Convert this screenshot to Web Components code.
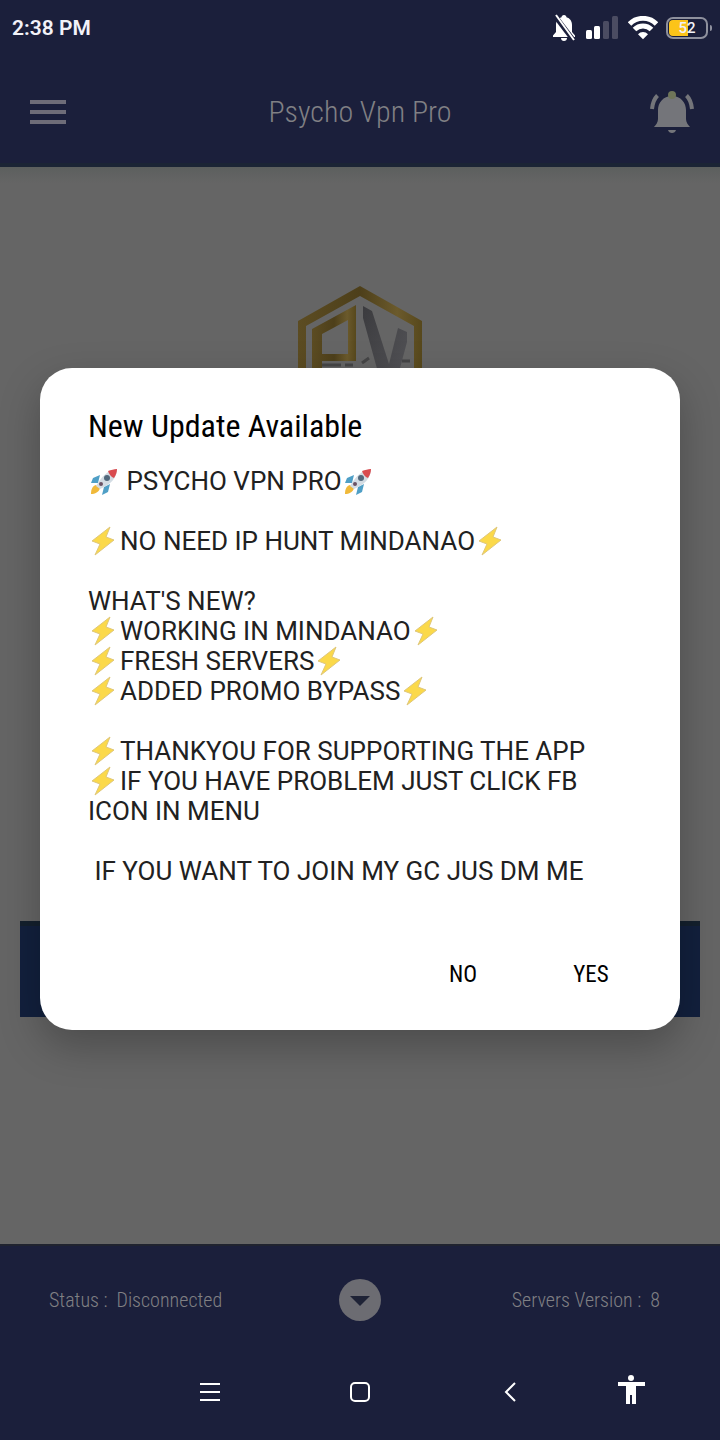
<!DOCTYPE html>
<html lang="en">
<head>
<meta charset="utf-8">
<meta name="viewport" content="width=device-width, initial-scale=1">
<title>Psycho Vpn Pro</title>
<style>
html, body{
    margin:0;
    min-height:100%;
}
body{
    --narrow:'Roboto Condensed',Roboto,sans-serif;
    --bar:#1b1f3b;
    --muted:#808084;
    font-family:Roboto,sans-serif;
    background:#646464;
}
</style>
</head>
<body>

<vpn-screen>
    <status-bar slot="status" time="2:38 PM" battery="52"></status-bar>
    <app-bar slot="header">Psycho Vpn Pro</app-bar>
    <vpn-home></vpn-home>
    <connection-bar slot="footer">
        <span slot="status">Status :&nbsp; Disconnected</span>
        <span slot="version">Servers Version :&nbsp; 8</span>
    </connection-bar>
    <system-nav slot="nav"></system-nav>
    <update-dialog slot="dialog">
        <span slot="title">New Update Available</span>
        <div slot="message"><emoji-icon name="rocket"></emoji-icon> PSYCHO VPN PRO<emoji-icon name="rocket"></emoji-icon>

<emoji-icon name="bolt"></emoji-icon>NO NEED IP HUNT MINDANAO<emoji-icon name="bolt"></emoji-icon>

WHAT'S NEW?
<emoji-icon name="bolt"></emoji-icon>WORKING IN MINDANAO<emoji-icon name="bolt"></emoji-icon>
<emoji-icon name="bolt"></emoji-icon>FRESH SERVERS<emoji-icon name="bolt"></emoji-icon>
<emoji-icon name="bolt"></emoji-icon>ADDED PROMO BYPASS<emoji-icon name="bolt"></emoji-icon>

<emoji-icon name="bolt"></emoji-icon>THANKYOU FOR SUPPORTING THE APP
<emoji-icon name="bolt"></emoji-icon>IF YOU HAVE PROBLEM JUST CLICK FB ICON IN MENU

 IF YOU WANT TO JOIN MY GC JUS DM ME</div>
    </update-dialog>
</vpn-screen>

<script>
// small helper, every element gets an open shadow root from its markup
class BaseElement extends HTMLElement{
    constructor(){
        super();
        const template = document.createElement('template');
        template.innerHTML = this.constructor.markup;
        this.attachShadow({mode:'open'});
        this.shadowRoot.appendChild(template.content.cloneNode(true));
    }
}

class VpnScreen extends BaseElement{
    static markup = `
<style>
:host{
    display:flex;
    flex-direction:column;
    position:relative;
    min-height:100vh;
}
main{
    flex:1;
    display:flex;
}
.overlay{
    position:absolute;
    inset:0;
    display:grid;
    align-items:center;
    padding:0 40px 42px;
}
</style>
<slot name="status"></slot>
<slot name="header"></slot>
<main><slot></slot></main>
<slot name="footer"></slot>
<slot name="nav"></slot>
<div class="overlay"><slot name="dialog"></slot></div>
`;
}

class StatusBar extends BaseElement{
    static markup = `
<style>
:host{
    display:flex;
    justify-content:space-between;
    align-items:center;
    height:56px;
    padding:0 8px 0 12px;
    background:var(--bar);
    color:#f2f2f8;
}
time{
    font-size:21px;
    font-weight:600;
    line-height:32px;
}
.icons{
    display:flex;
    align-items:center;
    gap:8px;
}
svg{
    display:block;
}
.battery{
    display:flex;
    align-items:center;
    gap:2px;
}
.battery b{
    box-sizing:border-box;
    width:42px;
    height:22px;
    border:2px solid #8e909d;
    border-radius:7px;
    padding:1px;
    font-size:15px;
    font-weight:500;
    line-height:16px;
    text-align:center;
    background:linear-gradient(90deg,#fcc419 52%,transparent 52%) content-box;
}
.battery i{
    width:2px;
    height:6px;
    border-radius:0 2px 2px 0;
    background:#8e909d;
}
</style>
<time></time>
<div class="icons">
    <svg width="26" height="28" viewBox="0 0 26 28" role="img" aria-label="Muted">
        <path d="M12 1c1.500 0 2.500 1 2.500 2.300 3.500 1 5.500 4 5.500 7.700v7l3 3.500V23H1v-1.500L4 18v-7c0-3.700 2-6.700 5.500-7.700C9.500 2 10.500 1 12 1zM9 24h6c0 2-1.300 3-3 3s-3-1-3-3z" fill="#fff"/>
        <path d="M3 2l19 25" stroke="#1b1f3b" stroke-width="5"/>
        <path d="M4 1l18 25" stroke="#fff" stroke-width="2"/>
    </svg>
    <svg width="34" height="24" viewBox="0 0 34 24" role="img" aria-label="Signal">
        <rect x="0" y="14" width="6" height="9" rx="1.500" fill="#fff"/>
        <rect x="8" y="10" width="6" height="13" rx="1.500" fill="#fff"/>
        <rect x="17" y="5" width="6" height="18" rx="1.500" fill="#4b4c62"/>
        <rect x="26" y="0" width="6" height="23" rx="1.500" fill="#4b4c62"/>
    </svg>
    <svg width="30" height="24" viewBox="0 0 30 24" role="img" aria-label="Wi-Fi">
        <path d="M1.500 8a19 19 0 0 1 27 0M6.500 13.500a12 12 0 0 1 17 0" fill="none" stroke="#fff" stroke-width="5"/>
        <path d="M10 18.200a7 7 0 0 1 10 0l-5 5z" fill="#fff"/>
    </svg>
    <div class="battery"><b></b><i></i></div>
</div>
`;
    connectedCallback(){
        this.shadowRoot.querySelector('time').textContent = this.getAttribute('time');
        this.shadowRoot.querySelector('b').textContent = this.getAttribute('battery');
    }
}

class AppBar extends BaseElement{
    static markup = `
<style>
:host{
    display:grid;
    grid-template-columns:44px 1fr 44px;
    align-items:center;
    height:111px;
    padding:0 26px;
    box-sizing:border-box;
    background:var(--bar);
    box-shadow:inset 0 -4px #1b2435;
}
h1{
    margin:0;
    font:300 30px/40px var(--narrow);
    color:var(--muted);
    text-align:center;
}
button{
    border:0;
    padding:0;
    background:none;
    cursor:pointer;
}
svg{
    display:block;
    margin:auto;
}
</style>
<button aria-label="Menu">
    <svg width="36" height="24" fill="#6e6c78"><path d="M0 0h36v4H0zM0 10h36v4H0zM0 20h36v4H0z"/></svg>
</button>
<h1><slot></slot></h1>
<button aria-label="Notifications">
    <svg width="44" height="42" viewBox="0 0 44 42">
        <g fill="#74757a">
            <path d="M8 28V19C8 12 13 5 22 5s14 7 14 14v9c0 3 2 6 4 8H4c2-2 4-5 4-8z"/>
            <path d="M18 39h8c-.5 2-2 3-4 3s-3.500-1-4-3z"/>
        </g>
        <circle cx="22" cy="4" r="4" fill="#6f7559"/>
        <path d="M7.500 4.500C4 8 2.500 12 2 18M36.500 4.500C40 8 41.500 12 42 18" fill="none" stroke="#74757a" stroke-width="4"/>
    </svg>
</button>
`;
}

class VpnHome extends BaseElement{
    static markup = `
<style>
:host{
    flex:1;
    display:flex;
    flex-direction:column;
    justify-content:space-between;
    align-items:center;
    box-sizing:border-box;
    padding:119px 20px 227px;
    background:linear-gradient(#5c5f5e,#656565 16px);
}
.connect{
    align-self:stretch;
    height:96px;
    border:0;
    border-top:5px solid #14202d;
    background:#12203d;
}
</style>
<svg width="124" height="144" viewBox="0 0 124 144" role="img" aria-label="PV logo">
    <defs>
        <linearGradient id="gold" x1="0" x2="1">
            <stop offset="0" stop-color="#5c4c22"/>
            <stop offset=".5" stop-color="#4d3f1a"/>
            <stop offset=".8" stop-color="#6b5a2c"/>
            <stop offset="1" stop-color="#57481c"/>
        </linearGradient>
        <linearGradient id="steel" x1="0" x2="1" y2="1">
            <stop offset="0" stop-color="#3b3b3e"/>
            <stop offset="1" stop-color="#56565a"/>
        </linearGradient>
    </defs>
    <path d="M62 0l62 35v74l-62 35L0 109V35zM62 10L8 40v64l54 30 54-30V40z" fill="url(#gold)" fill-rule="evenodd"/>
    <path d="M58 19v56H24v30H14V43zM50 34L24 48v20h26z" fill="url(#gold)" fill-rule="evenodd"/>
    <path d="M65 20l9 5 17 53 9-36 9 4v10l-14 52h-9L65 32z" fill="url(#steel)"/>
    <path d="M24 79h19M47 79h8M64 77l7-5M104 75h8" stroke="#454546" stroke-width="3"/>
</svg>
<button class="connect" aria-label="Connect"></button>
`;
}

class ConnectionBar extends BaseElement{
    static markup = `
<style>
:host{
    display:grid;
    grid-template-columns:1fr 44px 1fr;
    align-items:center;
    height:112px;
    box-sizing:border-box;
    padding:0 49px;
    background:var(--bar);
    box-shadow:inset 0 2px #20232f;
    font:300 20px/24px var(--narrow);
    color:var(--muted);
}
.version{
    padding-right:11px;
    text-align:right;
}
button{
    border:0;
    padding:0;
    background:none;
    cursor:pointer;
}
svg{
    display:block;
}
</style>
<div><slot name="status"></slot></div>
<button aria-label="Show log">
    <svg width="44" height="44"><circle cx="22" cy="22" r="21" fill="#6c6c72"/><path d="M12 18h20L22 28z" fill="#1f2336"/></svg>
</button>
<div class="version"><slot name="version"></slot></div>
`;
}

class SystemNav extends BaseElement{
    static markup = `
<style>
:host{
    display:grid;
    grid-template-columns:9fr 10fr 10fr 10fr 9fr;
    align-items:center;
    height:84px;
    box-sizing:border-box;
    padding-bottom:12px;
    background:var(--bar);
}
button{
    border:0;
    padding:0;
    background:none;
    justify-self:center;
    cursor:pointer;
}
button:first-of-type{
    grid-column:2;
}
button:last-of-type{
    justify-self:start;
    margin-left:32px;
}
svg{
    display:block;
    fill:none;
    stroke:#fff;
    stroke-width:2;
}
</style>
<button aria-label="Recent apps"><svg width="20" height="20"><path d="M0 2h20M0 10h20M0 18h20"/></svg></button>
<button aria-label="Home"><svg width="22" height="22"><rect x="2" y="2" width="18" height="18" rx="4"/></svg></button>
<button aria-label="Back"><svg width="12" height="20"><path d="M11 1L2 10l9 9"/></svg></button>
<button aria-label="Accessibility">
    <svg width="28" height="34"><g fill="#fff" stroke="none"><circle cx="14" cy="3" r="3"/><path d="M1 7h27v4h-9v18h-4v-9h-2v9H9V11H1z"/></g></svg>
</button>
`;
}

class UpdateDialog extends BaseElement{
    static markup = `
<style>
:host{
    display:block;
}
section{
    padding:38px 25px 23px 48px;
    background:#fff;
    border-radius:32px;
    box-shadow:0 16px 40px rgba(0,0,0,.25);
}
h2{
    margin:0 0 20px;
    font:400 32px/40px var(--narrow);
    color:#000;
}
.message{
    margin-right:23px;
    font-size:26px;
    line-height:30px;
    color:#212121;
    white-space:pre-wrap;
}
.actions{
    display:flex;
    justify-content:flex-end;
    margin-top:57px;
}
button{
    width:128px;
    height:64px;
    border:0;
    background:none;
    font:400 23px/28px var(--narrow);
    color:#000;
    cursor:pointer;
}
</style>
<section role="dialog" aria-labelledby="title">
    <h2 id="title"><slot name="title"></slot></h2>
    <div class="message"><slot name="message"></slot></div>
    <div class="actions">
        <button>NO</button>
        <button>YES</button>
    </div>
</section>
`;
    connectedCallback(){
        this.shadowRoot.querySelectorAll('button').forEach(btn => {
            btn.addEventListener('click',() => this.remove());
        });
    }
}

const emojis = {
    bolt:`<path d="M22 1L4 15l8 3-5 11 19-15-8-3z" fill="#fbd94a" stroke="#dfc77b" stroke-width="1"/>`,
    rocket:`
<path d="M12 9l-7 3-2 5 7 0zM22 18l-2 8-6 3 2-8z" fill="#4f9fc6"/>
<path d="M8 19c-4 1-5 5-5 9 4 0 8-2 9-6z" fill="#f0b93a"/>
<path d="M8 20c6-10 11-15 21-17 0 9-7 16-17 20z" fill="#d3dce3"/>
<path d="M20 5c3-1 6-2 9-2 0 3-1 6-3 9-3-1-5-4-6-7z" fill="#d94b4f"/>
<circle cx="19" cy="12" r="3" fill="#52687b"/>
<circle cx="13" cy="18" r="2" fill="#6b5264"/>`
};

class EmojiIcon extends BaseElement{
    static markup = `
<style>
:host{
    display:inline-block;
    width:32px;
    height:30px;
    vertical-align:top;
    white-space:normal;
}
svg{
    display:block;
}
</style>
<svg width="32" height="30" viewBox="0 0 32 30" role="img"></svg>
`;
    connectedCallback(){
        const svg = this.shadowRoot.querySelector('svg');
        svg.innerHTML = emojis[this.getAttribute('name')];
        svg.setAttribute('aria-label',this.getAttribute('name'));
    }
}

customElements.define('vpn-screen',VpnScreen);
customElements.define('status-bar',StatusBar);
customElements.define('app-bar',AppBar);
customElements.define('vpn-home',VpnHome);
customElements.define('connection-bar',ConnectionBar);
customElements.define('system-nav',SystemNav);
customElements.define('update-dialog',UpdateDialog);
customElements.define('emoji-icon',EmojiIcon);
</script>
</body>
</html>
